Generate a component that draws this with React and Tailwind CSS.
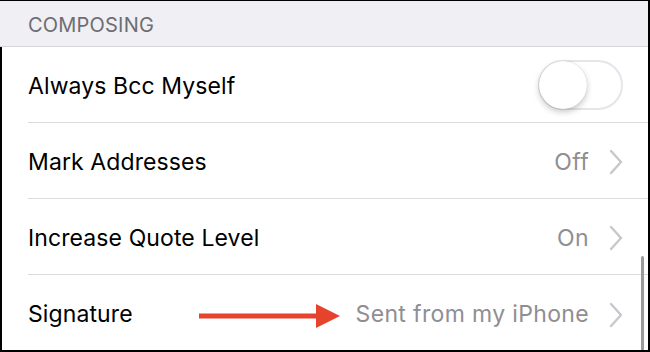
import React from "react";

function Chevron() {
  return (
    <svg width="14" height="26" viewBox="0 0 14 26" className="shrink-0">
      <path d="M2 2 L12 13 L2 24" fill="none" stroke="#c7c7cc" strokeWidth="2.4" strokeLinecap="round" strokeLinejoin="round" />
    </svg>
  );
}

function Row({ label, value, last, children }) {
  return (
    <div className="pl-[26px]">
      <div className={`h-[76px] flex items-center pr-[25px] pt-[3px] ${last ? "" : "border-b border-[#dcdce0]"}`}>
        <span className="text-[23px] text-black tracking-[0.1px]">{label}</span>
        <div className="ml-auto flex items-center">
          {children}
          {value !== undefined && (
            <>
              <span className="text-[23px] text-[#8e8e93] mr-[20px] tracking-[0.35px]">{value}</span>
              <Chevron />
            </>
          )}
        </div>
      </div>
    </div>
  );
}

export default function App() {
  return (
    <div
      className="w-[650px] h-[352px] overflow-hidden relative bg-white border-t border-r-2 border-b-2 border-black"
      style={{ fontFamily: "Inter, 'Noto Sans', sans-serif" }}
    >
      <div className="h-[46px] bg-[#efeff4] border-b border-[#d6d6da] pl-[28px] flex items-center">
        <span className="text-[20px] text-[#6d6d72] tracking-[0.2px] mt-[2px]">COMPOSING</span>
      </div>
      <div className="border-l-2 border-black">
        <Row label="Always Bcc Myself">
          <div className="w-[85px] h-[50px] rounded-full border-2 border-[#e5e5ea] bg-white relative -mt-[3px]">
            <div className="absolute left-[-1px] top-[-1px] w-[48px] h-[48px] rounded-full bg-white shadow-[0_3px_6px_rgba(0,0,0,0.22),0_0_1px_rgba(0,0,0,0.2)]" />
          </div>
        </Row>
        <Row label="Mark Addresses" value="Off" />
        <Row label="Increase Quote Level" value="On" />
        <Row label="Signature" value="Sent from my iPhone" last />
      </div>
      <svg className="absolute left-[199px] top-[302px]" width="142" height="26" viewBox="0 0 142 26">
        <rect x="0" y="10.5" width="120" height="5" fill="#e5432c" />
        <polygon points="117,1 141,13 117,25" fill="#e5432c" />
      </svg>
      <div className="absolute left-[641px] top-[255px] w-[3px] h-[100px] rounded-full bg-[#9a9a9e]" />
    </div>
  );
}
